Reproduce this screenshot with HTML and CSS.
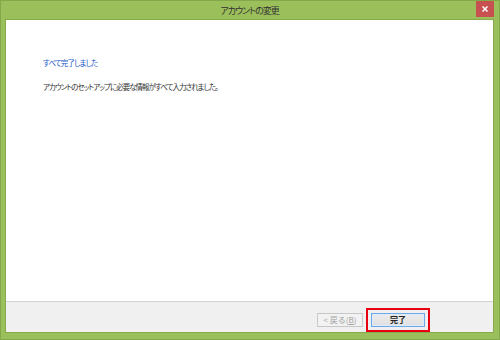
FILE: index.html
```html
<!DOCTYPE html>
<html lang="ja">
<head>
    <meta charset="UTF-8">
    <title>アカウントの変更</title>
    <link rel="stylesheet" href="styles.css">
</head>
<body>
    <div class="window">
        <div class="titlebar">
            <span></span>
            <span class="title">アカウントの変更</span>
            <span class="close">
                <svg width="6" height="6" viewBox="0 0 6 6"><path d="M0.5 0.5L5.5 5.5M5.5 0.5L0.5 5.5" stroke="#fff" stroke-width="1.5"/></svg>
            </span>
        </div>

        <div class="client">
            <div class="content">
                <p class="heading">すべて完了しました</p>
                <p class="message">アカウントのセットアップに必要な情報がすべて入力されました。</p>
            </div>

            <div class="footer">
                <button class="btn" disabled>&lt; 戻る(<u>B</u>)</button>
                <span class="highlight">
                    <button class="btn primary">完了</button>
                </span>
            </div>
        </div>
    </div>
</body>
</html>
```

FILE: styles.css
```css
body {
    margin: 0;
    font-family: "Noto Sans CJK JP", "Noto Sans", sans-serif;
    font-feature-settings: "palt";
}
.window {
    width: 500px;
    height: 340px;
    box-sizing: border-box;
    background: #9bbf5a;
    border: 1px solid #83a84a;
    display: flex;
    flex-direction: column;
    padding: 0 5px 6px 4px;
}
.titlebar {
    height: 18px;
    display: grid;
    grid-template-columns: 1fr auto 1fr;
    align-items: center;
}
.title {
    font-size: 9px;
    letter-spacing: -1px;
    color: #333;
    margin-top: 1px;
}
.close {
    justify-self: end;
    align-self: start;
    width: 18px;
    height: 16px;
    background: #c75050;
    display: flex;
    align-items: center;
    justify-content: center;
}
.client {
    flex: 1;
    display: flex;
    flex-direction: column;
    border: 1px solid #86aa4c;
    background: #fff;
}
.content {
    flex: 1;
    padding: 37px 0 0 37px;
}
.heading {
    margin: 0;
    font-size: 7.5px;
    letter-spacing: -0.9px;
    color: #2157c8;
    line-height: 12px;
}
.message {
    margin: 12px 0 0;
    font-size: 7.5px;
    letter-spacing: -1px;
    color: #333;
    line-height: 12px;
}
.footer {
    height: 31px;
    box-sizing: border-box;
    background: #f0f0f0;
    border-top: 1px solid #d2d2d2;
    display: flex;
    align-items: center;
    padding: 5px 0 0 311px;
    gap: 3px;
}
.btn {
    font-family: inherit;
    font-size: 8px;
    height: 14px;
    padding: 0;
    border: 1px solid #c8c8c8;
    background: #f2f2f2;
    color: #a2a2a2;
    width: 46px;
    line-height: 12px;
}
.highlight {
    border: 2px solid #e60012;
    padding: 3px 3px;
    display: flex;
}
.btn.primary {
    width: 54px;
    color: #222;
    font-weight: bold;
    border: 1px solid #6fa8e6;
    background: linear-gradient(#ececec, #e0e0e0);
    box-shadow: inset 0 0 0 1px #dcecfc;
}
```
